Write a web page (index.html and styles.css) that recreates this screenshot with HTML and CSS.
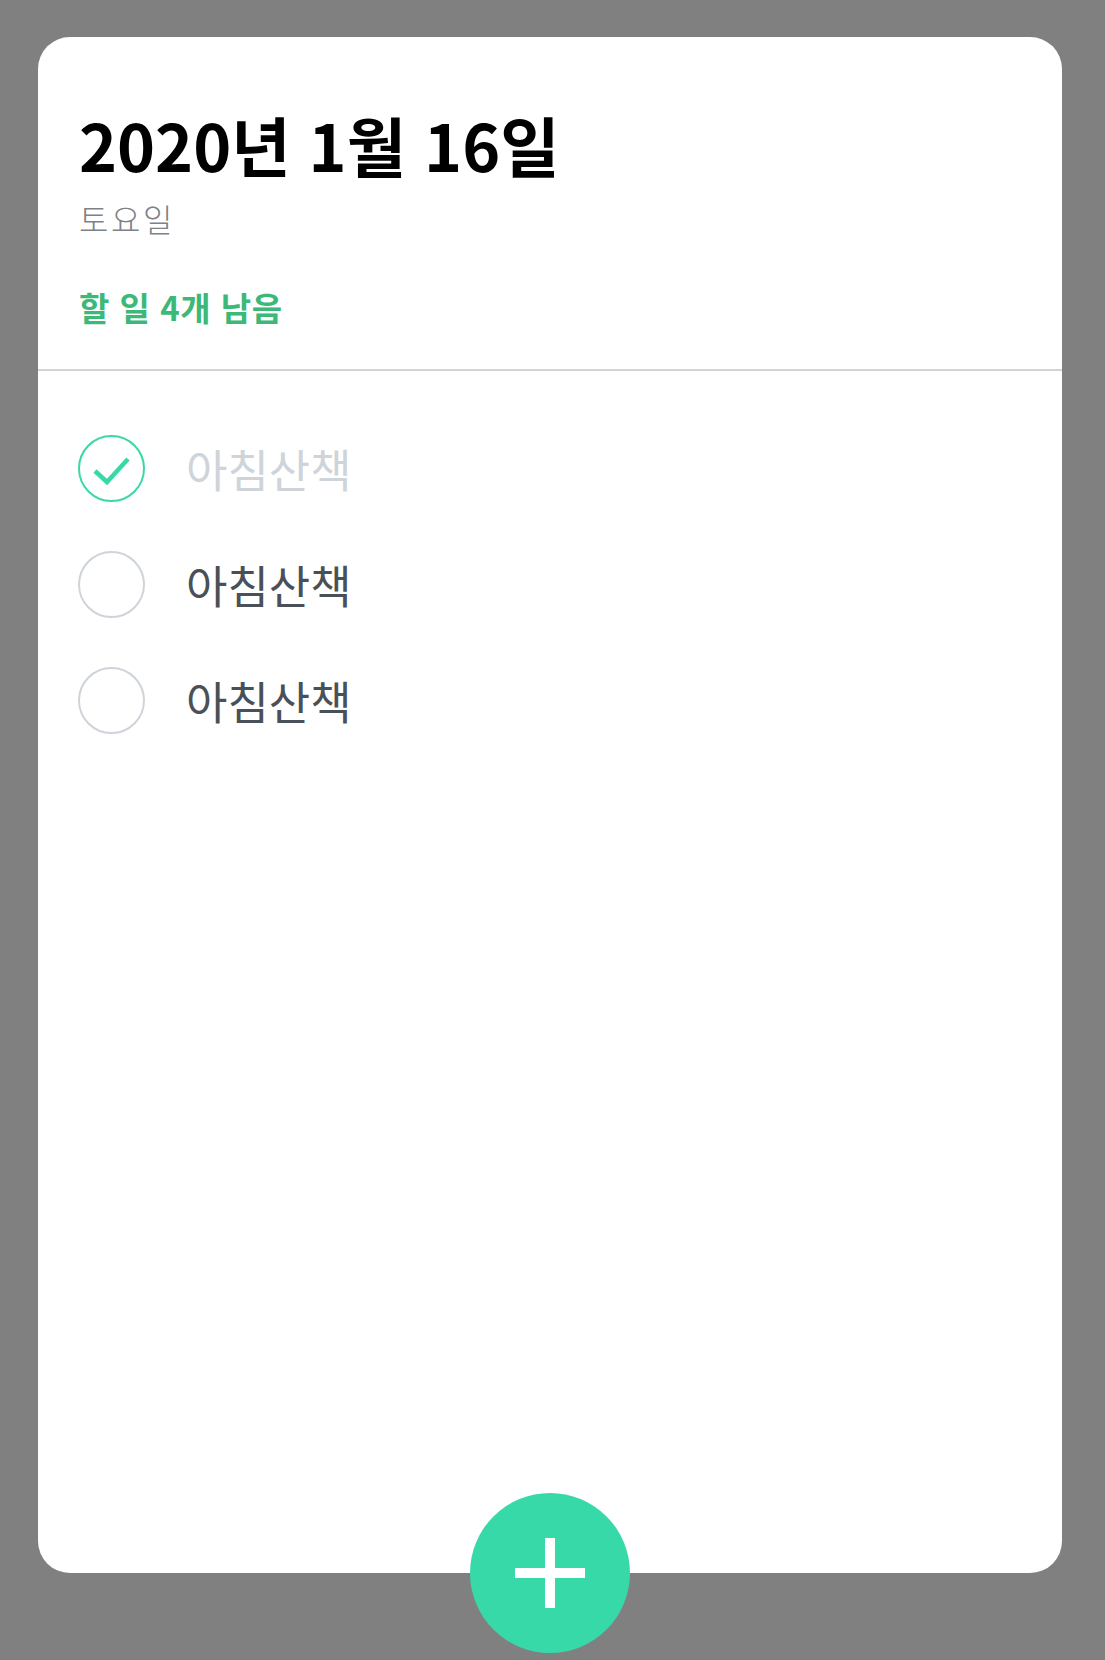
FILE: index.html
```html
<!DOCTYPE html>
<html lang="ko">
<head>
  <meta charset="UTF-8" />
  <title>할 일 목록</title>
  <link rel="stylesheet" href="styles.css">
</head>
<body>
  <div class="todo-template">
    <div class="todo-head">
      <h1>2020년 1월 16일</h1>
      <div class="day">토요일</div>
      <div class="tasks-left">할 일 4개 남음</div>
    </div>

    <ul class="todo-list">
      <li class="todo-item done">
        <span class="check-circle">
          <svg viewBox="0 0 67 67" width="67" height="67">
            <polyline points="17,36 29,47 50,24" fill="none" stroke="#38d9a9" stroke-width="4.5" />
          </svg>
        </span>
        <span class="text">아침산책</span>
      </li>
      <li class="todo-item">
        <span class="check-circle"></span>
        <span class="text">아침산책</span>
      </li>
      <li class="todo-item">
        <span class="check-circle"></span>
        <span class="text">아침산책</span>
      </li>
    </ul>

    <div class="add-button" role="button" aria-label="추가">
      <span class="plus"></span>
    </div>
  </div>
</body>
</html>
```

FILE: styles.css
```css
html {
  background: #808080;
}
body {
  margin: 0;
  padding: 37px 0 87px 38px;
  background: #808080;
  font-family: "Noto Sans CJK KR", "Noto Sans", sans-serif;
}
.todo-template {
  position: relative;
  width: 1024px;
  height: 1536px;
  background: white;
  border-radius: 32px;
}
.todo-head {
  padding: 69px 37px 42px 41px;
  border-bottom: 2px solid #d3d3d3;
}
.todo-head h1 {
  margin: 0;
  font-size: 64.5px;
  line-height: 1.2;
  font-weight: bold;
  color: #000;
}
.day {
  margin-top: 16px;
  font-size: 32px;
  line-height: 1.2;
  font-weight: 300;
  color: #7d8288;
  letter-spacing: 2.5px;
}
.tasks-left {
  margin-top: 50px;
  font-size: 33px;
  line-height: 1.2;
  font-weight: bold;
  color: #3cb878;
  letter-spacing: 0.5px;
}
.todo-list {
  list-style: none;
  margin: 0;
  padding: 39px 37px 0 40px;
}
.todo-item {
  display: flex;
  align-items: center;
  padding: 24.5px 0;
}
.check-circle {
  box-sizing: border-box;
  width: 67px;
  height: 67px;
  border: 2px solid #ced4da;
  border-radius: 50%;
  display: flex;
  align-items: center;
  justify-content: center;
  flex-shrink: 0;
}
.check-circle svg {
  display: block;
  margin: -2px;
}
.todo-item.done .check-circle {
  border-color: #38d9a9;
}
.text {
  margin-left: 41px;
  font-size: 45px;
  line-height: 1.2;
  color: #495057;
  position: relative;
  top: 1px;
}
.todo-item.done .text {
  color: #ced4da;
}
.add-button {
  position: absolute;
  left: 432px;
  bottom: -80px;
  width: 160px;
  height: 160px;
  border-radius: 50%;
  background: #38d9a9;
  display: flex;
  align-items: center;
  justify-content: center;
}
.plus {
  position: relative;
  width: 70px;
  height: 70px;
}
.plus::before,
.plus::after {
  content: "";
  position: absolute;
  background: white;
}
.plus::before {
  left: 0;
  top: 30px;
  width: 70px;
  height: 10px;
}
.plus::after {
  left: 30px;
  top: 0;
  width: 10px;
  height: 70px;
}
```
